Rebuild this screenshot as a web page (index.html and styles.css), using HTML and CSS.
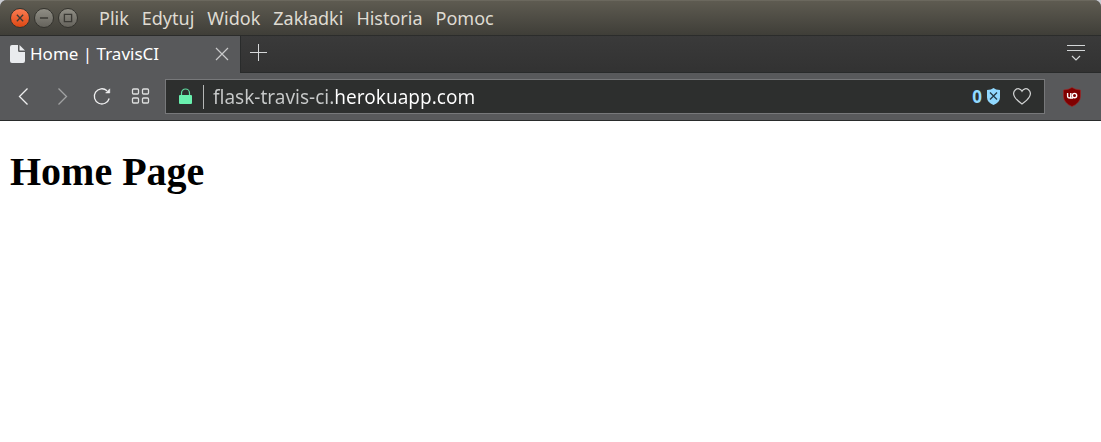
FILE: index.html
```html
<!DOCTYPE html>
<html lang="pl">
<head>
<meta charset="utf-8">
<meta name="viewport" content="width=device-width, initial-scale=1">
<title>Home | TravisCI</title>
<link rel="stylesheet" href="styles.css">
</head>
<body>
<div class="browser">
  <header class="titlebar">
    <div class="window-controls">
      <button class="window-button window-button-close" type="button" aria-label="Zamknij">
        <svg viewBox="0 0 20 20"><path d="M6.500 6.500l7 7M13.500 6.500l-7 7"/></svg>
      </button>
      <button class="window-button" type="button" aria-label="Minimalizuj">
        <svg viewBox="0 0 20 20"><path d="M5.5 10h9"/></svg>
      </button>
      <button class="window-button" type="button" aria-label="Maksymalizuj">
        <svg viewBox="0 0 20 20"><path d="M6 6h8v8h-8z"/></svg>
      </button>
    </div>
    <nav class="menu">
      <button type="button">Plik</button>
      <button type="button">Edytuj</button>
      <button type="button">Widok</button>
      <button type="button">Zakładki</button>
      <button type="button">Historia</button>
      <button type="button">Pomoc</button>
    </nav>
  </header>

  <div class="tabstrip">
    <div class="tab">
      <svg class="tab-icon" viewBox="0 0 15 18"><path fill="#e9ebee" d="M2 0h6v5.500q0 1.500 1.500 1.500H15v9q0 2-2 2H2q-2 0-2-2V2q0-2 2-2z"/><path fill="#e9ebee" d="M9.500 0L15 5.500h-5.500z"/></svg>
      <span class="tab-title">Home | TravisCI</span>
      <button class="icon-button" type="button" aria-label="Zamknij kartę">
        <svg width="14" height="14" viewBox="0 0 14 14"><path d="M1 1l12 12M13 1L1 13" stroke="#c9cacb" stroke-width="1.200"/></svg>
      </button>
    </div>
    <button class="icon-button new-tab" type="button" aria-label="Nowa karta">
      <svg width="17" height="17" viewBox="0 0 17 17"><path d="M8.500 0v17M0 8.500h17" stroke="#d6d8d9"/></svg>
    </button>
    <button class="icon-button tab-menu" type="button" aria-label="Menu kart">
      <svg width="18" height="17" viewBox="0 0 18 17" fill="none" stroke="#d3d6d7"><path d="M0 1.500h18M0 6.500h18"/><path d="M5 12l4 4 4-4" stroke-width="1.200"/></svg>
    </button>
  </div>

  <div class="toolbar">
    <div class="navigation">
      <button class="icon-button" type="button" aria-label="Wstecz">
        <svg width="20" height="20" viewBox="0 0 20 20"><path d="M13.500 1.500L5.500 9.500l8 8" fill="none" stroke="#eeeeef" stroke-width="1.300"/></svg>
      </button>
      <button class="icon-button" type="button" aria-label="Dalej">
        <svg width="20" height="20" viewBox="0 0 20 20"><path d="M5.500 1.500l8 8-8 8" fill="none" stroke="#a1a2a3" stroke-width="1.300"/></svg>
      </button>
      <button class="icon-button" type="button" aria-label="Odśwież">
        <svg width="20" height="20" viewBox="0 0 20 20"><path d="M17.200 11.500A7.600 7.600 0 1 1 15 3.700" fill="none" stroke="#eeeeef" stroke-width="1.300"/><path d="M17.800 1.800v4.200h-4.200z" fill="#eeeeef" stroke="#eeeeef" stroke-width=".5"/></svg>
      </button>
      <button class="icon-button" type="button" aria-label="Speed Dial">
        <svg width="20" height="20" viewBox="0 0 20 20" fill="none" stroke="#dedfdf" stroke-width="1.300"><rect x="1.500" y="2" width="6" height="5" rx="1"/><rect x="11.500" y="2" width="6" height="5" rx="1"/><rect x="1.500" y="11" width="6" height="5" rx="1"/><rect x="11.500" y="11" width="6" height="5" rx="1"/></svg>
      </button>
    </div>
    <div class="address">
      <svg class="lock" width="13" height="17" viewBox="0 0 13 17"><path d="M2.500 8V5a4 4 0 0 1 8 0v3" fill="none" stroke="#60dca0" stroke-width="1.200"/><rect y="7" width="13" height="9" rx="1" fill="#69f0ae"/></svg>
      <input class="url" type="text" value="flask-travis-ci.herokuapp.com" aria-label="Adres strony" spellcheck="false">
      <button class="icon-button blocked" type="button" aria-label="Zablokowane reklamy: 0">
        <span>0</span>
        <svg width="13" height="17" viewBox="0 0 13 17"><path d="M6.500 0Q8.500 2 13 2v7.500q0 4.500-6.500 7.500Q0 14 0 9.500V2Q4.500 2 6.500 0z" fill="#91d9ff"/><path d="M3 4.500l7 7M10 4.500l-7 7" stroke="#253e4b" stroke-width="1.400"/></svg>
      </button>
      <button class="icon-button" type="button" aria-label="Dodaj do zakładek">
        <svg width="18" height="17" viewBox="0 0 18 17"><path d="M9 3.200C7.700.500 4.500 0 2.500 1.700.300 3.600.300 6.600 1.700 9c1.500 2.600 4.400 5 7.300 7 2.900-2 5.800-4.400 7.300-7 1.400-2.400 1.400-5.400-.8-7.300C13.500 0 10.300.500 9 3.200z" fill="none" stroke="#cfd1d1" stroke-width="1.200"/></svg>
      </button>
    </div>
    <button class="icon-button extension" type="button" aria-label="uBlock Origin">
      <svg width="18" height="20" viewBox="0 0 18 20"><path d="M9 .500Q12 2.600 17.500 3v6q0 7-8.500 10.500Q.500 16 .500 9V3Q6 2.600 9 .500z" fill="#800000" stroke="#a32929" stroke-width=".6"/><path d="M4.600 6v3.300q0 1.700 1.600 1.700t1.600-1.700V6" fill="none" stroke="#fff" stroke-width="1.400"/><circle cx="11.500" cy="8.600" r="2.200" fill="none" stroke="#fff" stroke-width="1.400"/><path d="M7 10.300h3v1.400H7z" fill="#fff"/></svg>
    </button>
  </div>
</div>
<main class="page">
  <h1>Home Page</h1>
</main>
</body>
</html>
```
FILE: styles.css
```css
* {
  box-sizing: border-box;
}

body {
  margin: 0;
  background: linear-gradient(#c9cbd1 8px, #fff 8px) no-repeat, #fff;
  font-family: "Noto Sans", "Open Sans", sans-serif;
}

button,
input {
  margin: 0;
  padding: 0;
  border: 0;
  background: none;
  font: inherit;
}

svg {
  display: block;
  flex: none;
}

.browser {
  overflow: hidden;
  border-radius: 7px 7px 0 0;
  background: #58595b;
  border-bottom: 1px solid #292b2b;
}

.titlebar {
  display: flex;
  align-items: center;
  gap: 21px;
  height: 36px;
  padding: 0 10px;
  background: linear-gradient(#5e5b51, #3f3e38);
  border-top: 1px solid #6b685e;
  border-bottom: 1px solid #2b2c2b;
}

.window-controls {
  display: flex;
  gap: 4px;
}

.window-button {
  width: 20px;
  height: 20px;
  border: 1px solid #34332e;
  border-radius: 50%;
  background: linear-gradient(#908e85, #65635c);
}

.window-button svg {
  width: 18px;
  height: 18px;
  fill: none;
  stroke: #3b3a35;
  stroke-width: 1.5;
}

.window-button-close {
  background: linear-gradient(#fa7c53, #dd4814);
}

.menu {
  display: flex;
  gap: 13px;
  color: #dfdbd2;
  font-size: 18px;
  line-height: 24px;
}

.menu button {
  color: inherit;
}

.tabstrip {
  display: flex;
  align-items: stretch;
  height: 37px;
  background: linear-gradient(#3a3a3a, #323232);
}

.tab {
  display: flex;
  align-items: center;
  gap: 5px;
  width: 241px;
  padding: 0 11px 2px 10px;
  background: #58595b;
  border-right: 1px solid #292b2b;
  color: #fff;
  font-size: 17px;
}

.tab-icon {
  width: 15px;
  height: 18px;
}

.tab-title {
  flex: 1;
  white-space: nowrap;
}

.icon-button {
  display: flex;
  flex: none;
  align-items: center;
  justify-content: center;
}

.new-tab,
.tab-menu {
  padding-bottom: 3px;
  border-bottom: 1px solid #292b2b;
}

.new-tab {
  flex: 1;
  justify-content: flex-start;
  padding-left: 9px;
}

.tab-menu {
  padding-right: 16px;
}

.toolbar {
  display: flex;
  align-items: center;
  height: 47px;
  padding: 0 20px 0 14px;
}

.navigation {
  display: flex;
  gap: 19px;
  margin-right: 14px;
}

.address {
  display: flex;
  flex: 1;
  align-items: center;
  min-width: 0;
  height: 35px;
  padding: 0 13px;
  background: #2d2f2e;
  border: 1px solid #77787a;
}

.lock {
  margin-right: 11px;
}

.url {
  flex: 1;
  min-width: 0;
  height: 24px;
  padding-left: 9px;
  border-left: 1px solid #b5b7b6;
  background: linear-gradient(90deg, #c8caca 121px, #fff 121px) content-box;
  background-clip: text;
  color: transparent;
  caret-color: #fff;
  font-size: 19px;
  outline: none;
}

.blocked {
  gap: 5px;
  margin-right: 13px;
  color: #91d9ff;
  font-size: 17px;
  font-weight: 700;
}

.extension {
  margin-left: 18px;
}

.page {
  padding: 0 10px;
  font-family: "Liberation Serif", serif;
}

.page h1 {
  margin: 28px 0;
  font-size: 40px;
  line-height: 46px;
}
```
